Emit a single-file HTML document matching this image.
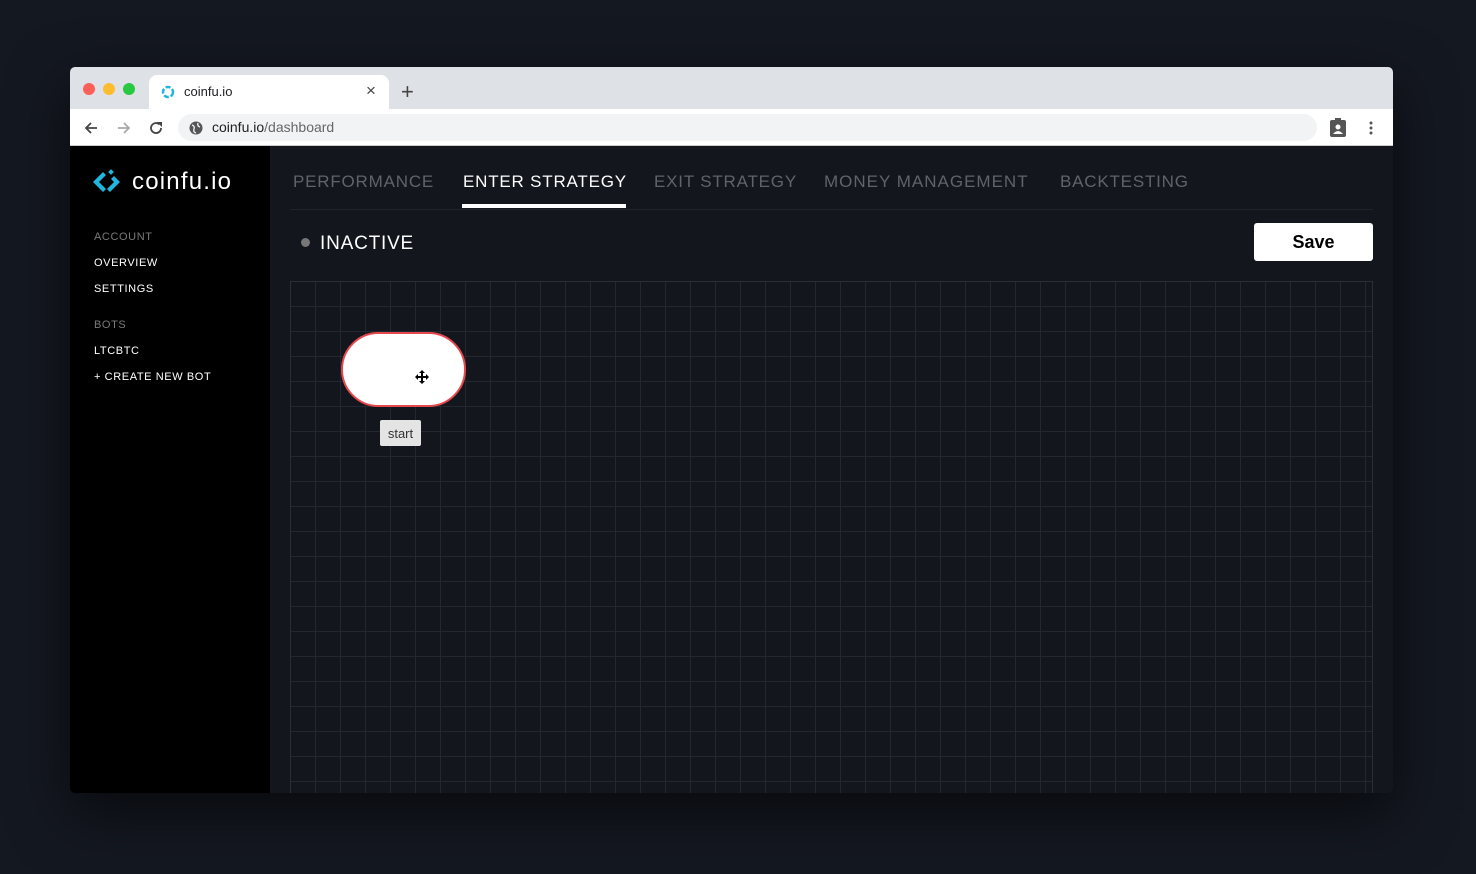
<!DOCTYPE html>
<html><head><meta charset="utf-8"><style>
*{margin:0;padding:0;box-sizing:border-box}
body{width:1476px;height:874px;background:#141821;font-family:"Liberation Sans",sans-serif;position:relative;overflow:hidden}
.win{position:absolute;left:70px;top:67px;width:1323px;height:726px;border-radius:5px;overflow:hidden;box-shadow:0 20px 60px rgba(0,0,0,.6);background:#13161d}
.tabbar{position:absolute;left:0;top:0;width:100%;height:42px;background:#dee1e6}
.dot{position:absolute;top:16px;width:12px;height:12px;border-radius:50%}
.tab{position:absolute;left:79px;top:8px;width:240px;height:34px;background:#fff;border-radius:8px 8px 0 0}
.addr{position:absolute;left:0;top:42px;width:100%;height:37px;background:#fff;border-bottom:1px solid #ccc}
.url{position:absolute;left:108px;top:5px;width:1139px;height:27px;background:#f1f3f4;border-radius:14px;font-size:14px;color:#202124;line-height:27px;padding-left:34px}
.side{position:absolute;left:0;top:79px;width:200px;height:647px;background:#000}
.side .h{position:absolute;left:24px;font-size:11px;color:#7a7a7a;letter-spacing:.6px}
.side .l{position:absolute;left:24px;font-size:11px;color:#fff;letter-spacing:.6px}
.nav{position:absolute;top:105px;font-size:17px;letter-spacing:.8px;color:#5f636b}
.grid{position:absolute;left:220px;top:214px;width:1083px;height:520px;border:1px solid #2a2e36;
background-color:#13161d;background-image:linear-gradient(#23272f 1px,transparent 1px),linear-gradient(90deg,#23272f 1px,transparent 1px);background-size:25px 25px;background-position:-1px -1px}
</style></head><body>
<div class="win">
 <div class="tabbar">
  <div class="dot" style="left:13px;background:#fe5f57"></div>
  <div class="dot" style="left:33px;background:#febc2e"></div>
  <div class="dot" style="left:53px;background:#28c840"></div>
  <div class="tab">
   <svg style="position:absolute;left:12px;top:10px" width="14" height="14" viewBox="0 0 14 14"><circle cx="7" cy="7" r="5" fill="none" stroke="#1fb6e0" stroke-width="2.5" stroke-dasharray="5 2"/></svg>
   <span style="position:absolute;left:35px;top:9px;font-size:13px;color:#202124">coinfu.io</span>
   <span style="position:absolute;left:217px;top:6px;font-size:17px;color:#444">×</span>
  </div>
  <span style="position:absolute;left:331px;top:14px;font-size:22px;color:#444;line-height:1">+</span>
 </div>
 <div class="addr">
  <svg style="position:absolute;left:13px;top:11px" width="16" height="16" viewBox="0 0 16 16"><path d="M14 8H3M8 3L3 8l5 5" fill="none" stroke="#444" stroke-width="1.8"/></svg>
  <svg style="position:absolute;left:46px;top:11px" width="16" height="16" viewBox="0 0 16 16"><path d="M2 8h11M8 3l5 5-5 5" fill="none" stroke="#aaa" stroke-width="1.8"/></svg>
  <svg style="position:absolute;left:78px;top:11px" width="16" height="16" viewBox="0 0 16 16"><path d="M13 8A5 5 0 1 1 11.5 4.5" fill="none" stroke="#444" stroke-width="1.8"/><path d="M9 2h5v5z" fill="#444"/></svg>
  <div class="url"><svg style="position:absolute;left:11px;top:7px" width="14" height="14" viewBox="0 0 14 14"><circle cx="7" cy="7" r="6.5" fill="#555"/><path d="M3 4q3 1 2 4t2 4M9 2q-1 3 2 4" stroke="#f1f3f4" stroke-width="1.3" fill="none"/></svg>coinfu.io<span style="color:#666">/dashboard</span></div>
  <svg style="position:absolute;left:1260px;top:9px" width="16" height="19" viewBox="0 0 16 19"><rect x="0" y="2" width="16" height="17" rx="2" fill="#555"/><rect x="5" y="0" width="6" height="4" fill="#555"/><circle cx="8" cy="9" r="2.5" fill="#fff"/><path d="M3 16q5-6 10 0z" fill="#fff"/></svg>
  <svg style="position:absolute;left:1299px;top:11px" width="4" height="16" viewBox="0 0 4 16"><circle cx="2" cy="3" r="1.5" fill="#555"/><circle cx="2" cy="8" r="1.5" fill="#555"/><circle cx="2" cy="13" r="1.5" fill="#555"/></svg>
 </div>
 <div class="side">
  <svg style="position:absolute;left:23px;top:22px" width="27" height="28" viewBox="0 0 27 28"><g fill="#1fb6e0"><path d="M10 4l3 3-7 7 7 7-3 3-10-10z"/><path d="M17 24l-3-3 7-7-3-3 3-3 6 6z"/><rect x="16" y="2" width="4" height="4" transform="rotate(45 18 4)"/></g></svg>
  <span style="position:absolute;left:62px;top:22px;font-size:24px;color:#fff;letter-spacing:1.2px">coinfu.io</span>
  <span class="h" style="top:85px">ACCOUNT</span>
  <span class="l" style="top:111px">OVERVIEW</span>
  <span class="l" style="top:137px">SETTINGS</span>
  <span class="h" style="top:173px">BOTS</span>
  <span class="l" style="top:199px">LTCBTC</span>
  <span class="l" style="top:225px">+ CREATE NEW BOT</span>
 </div>
 <span class="nav" style="left:223px">PERFORMANCE</span>
 <span class="nav" style="left:393px;color:#fff">ENTER STRATEGY</span>
 <span class="nav" style="left:584px">EXIT STRATEGY</span>
 <span class="nav" style="left:754px;letter-spacing:1px">MONEY MANAGEMENT</span>
 <span class="nav" style="left:990px">BACKTESTING</span>
 <div style="position:absolute;left:392px;top:137px;width:164px;height:4px;background:#fff"></div>
 <div style="position:absolute;left:220px;top:142px;width:1083px;height:1px;background:#1f232b"></div>
 <div style="position:absolute;left:231px;top:171px;width:9px;height:9px;border-radius:50%;background:#777"></div>
 <span style="position:absolute;left:250px;top:166px;font-size:19px;color:#fff;letter-spacing:.8px">INACTIVE</span>
 <div style="position:absolute;left:1184px;top:156px;width:119px;height:38px;background:#fff;border-radius:3px;font-size:18px;font-weight:bold;text-align:center;line-height:38px;color:#000">Save</div>
 <div class="grid"></div>
 <div style="position:absolute;left:271px;top:265px;width:125px;height:75px;border-radius:38px;background:#fff;border:2px solid #e6494d"></div>
 <svg style="position:absolute;left:345px;top:303px" width="14" height="14" viewBox="0 0 14 14"><path d="M7 0l3 3H8v3h3V4l3 3-3 3V8H8v3h2l-3 3-3-3h2V8H3v2L0 7l3-3v2h3V3H4z" fill="#000"/></svg>
 <div style="position:absolute;left:310px;top:353px;width:41px;height:26px;background:#e4e4e4;border-radius:2px;font-size:13px;color:#333;text-align:center;line-height:27px">start</div>
</div>
</body></html>
